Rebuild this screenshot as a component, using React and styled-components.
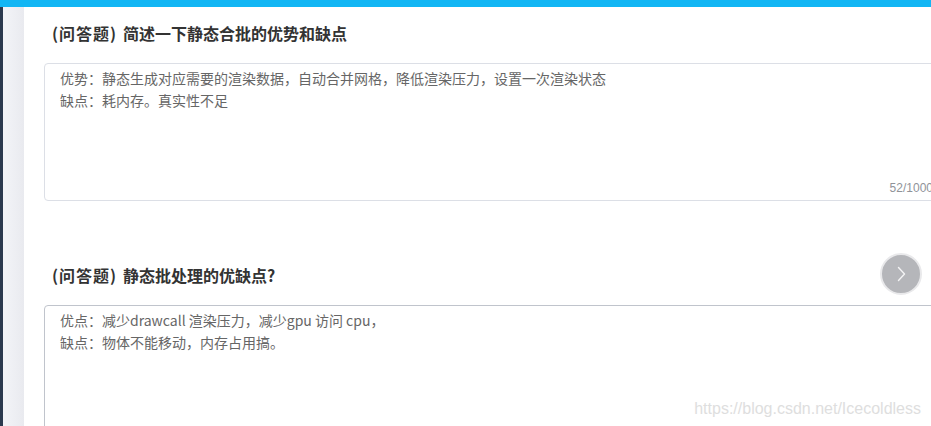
import React from 'react';
import styled, { createGlobalStyle } from 'styled-components';

const GlobalStyle = createGlobalStyle`
    html, body {
        margin: 0;
        padding: 0;
        background: #ffffff;
        overflow: hidden;
    }
    body {
        font-family: "Noto Sans CJK SC", "Liberation Sans", sans-serif;
    }
`;

const questions = [
    {
        type: '(问答题)',
        title: '简述一下静态合批的优势和缺点',
        lines: [
            '优势：静态生成对应需要的渲染数据，自动合并网格，降低渲染压力，设置一次渲染状态',
            '缺点：耗内存。真实性不足',
        ],
        count: '52/1000',
        height: 138,
        border: '#dcdfe6',
    },
    {
        type: '(问答题)',
        title: '静态批处理的优缺点?',
        lines: [
            '优点：减少drawcall 渲染压力，减少gpu 访问 cpu，',
            '缺点：物体不能移动，内存占用搞。',
        ],
        height: 160,
        border: '#c0c4cc',
        next: true,
    },
];

function App() {
    return (
        <>
            <GlobalStyle />
            <Page>
                <TopBar />
                <Body>
                    <Sidebar />
                    <Gutter />
                    <Main>
                        {questions.map((q, i) => (
                            <Question key={i} $first={i === 0}>
                                <Title>
                                    <Tag>{q.type}</Tag>
                                    {q.title}
                                </Title>
                                <AnswerBox $height={q.height} $border={q.border}>
                                    {q.lines.map((line, j) => (
                                        <Line key={j}>{line}</Line>
                                    ))}
                                    {q.count && <Counter>{q.count}</Counter>}
                                </AnswerBox>
                                {q.next && (
                                    <NextButton>
                                        <svg width="16" height="16" viewBox="0 0 16 16" fill="none">
                                            <path d="M5.5 1.5 L11.5 8 L5.5 14.5" stroke="#f4f4f5" strokeWidth="1.4" strokeLinecap="round" strokeLinejoin="round" />
                                        </svg>
                                    </NextButton>
                                )}
                            </Question>
                        ))}
                    </Main>
                </Body>
                <Watermark>https://blog.csdn.net/Icecoldless</Watermark>
            </Page>
        </>
    );
}

const Page = styled.div`
    position: relative;
    width: 931px;
    height: 426px;
    overflow: hidden;
    display: flex;
    flex-direction: column;
`;

const TopBar = styled.div`
    height: 7px;
    background: #12b6f4;
    flex-shrink: 0;
`;

const Body = styled.div`
    flex: 1;
    display: flex;
`;

const Sidebar = styled.div`
    width: 3px;
    background: #2c3a4f;
    flex-shrink: 0;
`;

const Gutter = styled.div`
    width: 21px;
    background: linear-gradient(to right, #f3f4f8, #e9eaef);
    flex-shrink: 0;
`;

const Main = styled.div`
    flex: 1;
    padding-left: 20px;
`;

const Question = styled.div`
    position: relative;
    padding-top: ${p => (p.$first ? '15px' : '63px')};
`;

const Title = styled.div`
    padding-left: 8px;
    font-size: 16px;
    line-height: 22px;
    font-weight: bold;
    color: #333333;
    margin-bottom: 19px;
`;

const Tag = styled.span`
    display: inline-block;
    letter-spacing: 1px;
    margin-right: 6px;
`;

const AnswerBox = styled.div`
    position: relative;
    box-sizing: border-box;
    width: 900px;
    height: ${p => p.$height}px;
    border: 1px solid ${p => p.$border};
    border-radius: 4px;
    padding: 3px 15px;
    font-size: 14px;
    line-height: 22px;
    color: #666666;
`;

const Line = styled.div`
    white-space: nowrap;
`;

const Counter = styled.span`
    position: absolute;
    right: 10px;
    bottom: 4px;
    font-family: "Liberation Sans", sans-serif;
    font-size: 12px;
    line-height: 16px;
    color: #909399;
`;

const NextButton = styled.div`
    position: absolute;
    left: 836px;
    top: 52px;
    width: 38px;
    height: 38px;
    border-radius: 50%;
    background: #b5b6ba;
    border: 2px solid #e9e9eb;
    display: flex;
    align-items: center;
    justify-content: center;
`;

const Watermark = styled.div`
    position: absolute;
    right: 10px;
    bottom: 7px;
    font-family: "Liberation Sans", sans-serif;
    font-size: 16px;
    line-height: 20px;
    color: #dedede;
`;

export default App;
